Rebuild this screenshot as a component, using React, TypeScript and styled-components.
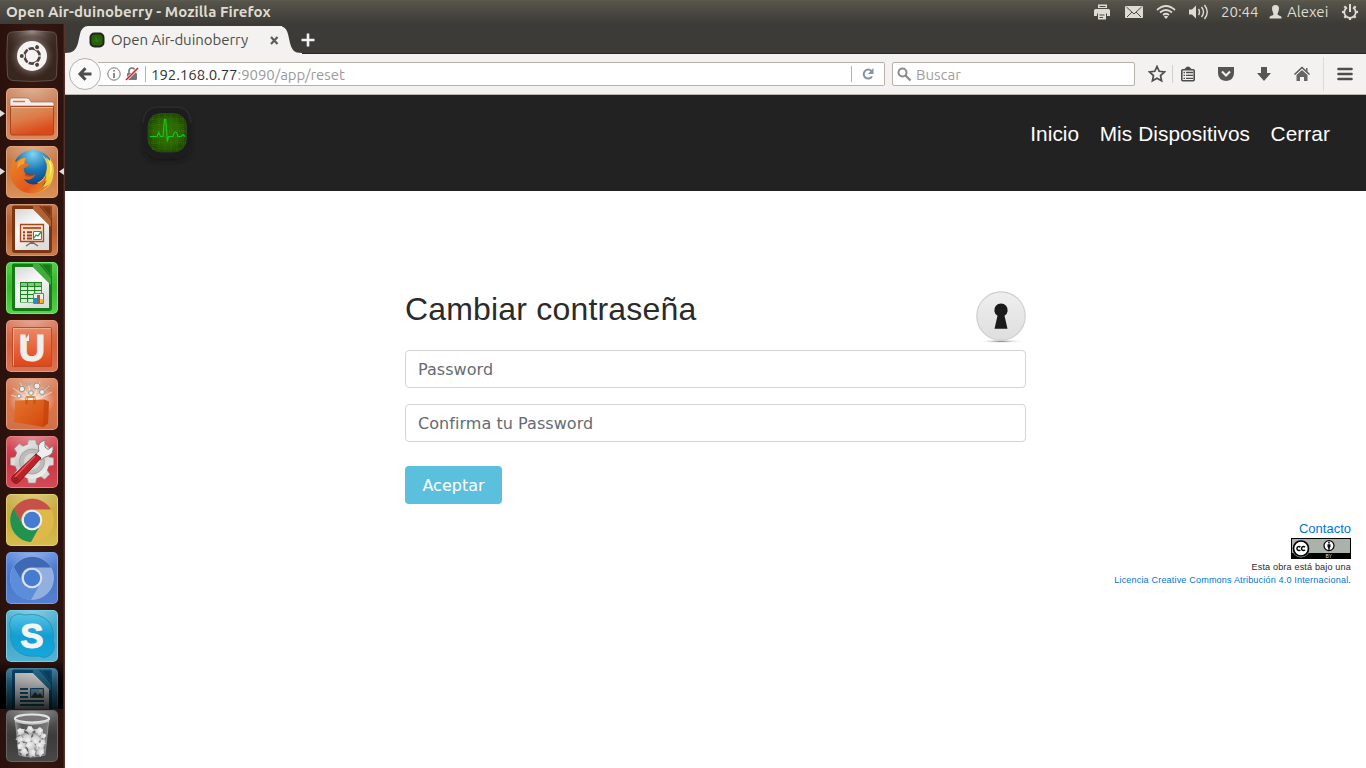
import React from "react";
import styled, { createGlobalStyle } from "styled-components";

const GlobalStyle = createGlobalStyle`
  *, *::before, *::after { box-sizing: border-box; }
  html, body { margin: 0; padding: 0; overflow: hidden; background: #fff; }
  svg { display: block; }
`;

const ui = `"Ubuntu", "Noto Sans", sans-serif`;

const Desktop = styled.div`
  width: 1366px;
  height: 768px;
  display: flex;
  flex-direction: column;
  overflow: hidden;
  font-family: ${ui};
`;

/* ---------- system panel ---------- */
const Panel = styled.header`
  flex: 0 0 24px;
  display: flex;
  align-items: center;
  justify-content: space-between;
  padding: 0 8px 0 6px;
  background: linear-gradient(#5e5b4f 0, #55534a 2px, #3e3d38 22px, #3c3b37);
  color: #dfdbd2;
  line-height: 24px;
`;
const WindowTitle = styled.span`
  font-size: 15px;
  font-weight: 700;
  letter-spacing: 0.05px;
  white-space: nowrap;
`;
const Indicators = styled.div`
  display: flex;
  align-items: center;
  height: 24px;
`;
const Indicator = styled.span<{ $w: number; $gap: number }>`
  width: ${(p) => p.$w}px;
  margin-right: ${(p) => p.$gap}px;
  font-size: 15px;
  white-space: nowrap;
`;

const Workspace = styled.div`
  flex: 1;
  display: flex;
  min-height: 0;
`;

/* ---------- launcher ---------- */
const Launcher = styled.nav`
  flex: 0 0 65px;
  display: flex;
  flex-direction: column;
  background: linear-gradient(90deg, #2a110c, #341711 50%, #2d130e);
  border-right: 1px solid #59322b;
  box-shadow: inset -1px 0 #42201a;
`;
const AppStack = styled.div`
  position: relative;
  flex: 0 0 685px;
  overflow: hidden;
  display: flex;
  flex-direction: column;
  gap: 6px;
  padding: 6px 0 0 6px;
  &::before,
  &::after {
    content: "";
    position: absolute;
    left: 0;
    right: 1px;
    bottom: 0;
    height: 48px;
    background: linear-gradient(rgba(0, 0, 0, 0), rgba(0, 0, 0, 0.7) 35%, #000);
  }
  &::after {
    background: linear-gradient(rgba(0, 0, 0, 0), rgba(0, 0, 0, 0.2) 30%, rgba(0, 0, 0, 0.82));
  }
`;
const Tile = styled.div<{ $top: string; $mid: string; $bottom: string; $edge: string }>`
  position: relative;
  flex: 0 0 52px;
  width: 52px;
  height: 52px;
  border-radius: 5px;
  background: radial-gradient(ellipse 60% 40% at 50% 0, rgba(255, 255, 255, 0.35), rgba(255, 255, 255, 0)),
    linear-gradient(${(p) => p.$top}, ${(p) => p.$mid} 50%, ${(p) => p.$bottom});
  box-shadow: inset 0 0 0 1px ${(p) => p.$edge};
`;
const DashTile = styled.div`
  flex: 0 0 52px;
`;
const TrashSlot = styled.div`
  padding: 1px 0 0 6px;
`;
const Pip = styled.svg<{ $side: "left" | "right" }>`
  position: absolute;
  top: 21px;
  ${(p) => (p.$side === "left" ? "left: -6px;" : "right: -6px;")}
`;

/* ---------- browser ---------- */
const Browser = styled.main`
  flex: 1;
  display: flex;
  flex-direction: column;
  min-width: 0;
  background: #fff;
`;
const TabStrip = styled.div`
  flex: 0 0 30px;
  display: flex;
  align-items: flex-end;
  background: #3c3b37;
  box-shadow: inset 0 -1px #2b2a27;
`;
const TabBody = styled.div`
  height: 28px;
  width: 194px;
  padding-left: 1px;
  display: flex;
  align-items: center;
  background: #f4f2f1;
`;
const TabTitle = styled.span`
  width: 159px;
  margin-left: 6px;
  font-size: 15px;
  line-height: 28px;
  letter-spacing: -0.05px;
  color: #4c4c4c;
  white-space: nowrap;
`;
const NewTab = styled.svg`
  margin: 0 0 7px -1px;
`;
const Toolbar = styled.div`
  flex: 0 0 41px;
  display: flex;
  align-items: center;
  padding-left: 4px;
  background: #f4f2f1;
  border-bottom: 1px solid #b9b4ae;
`;
const BackButton = styled.div`
  position: relative;
  width: 32px;
  height: 32px;
  border: 1px solid #b4afa9;
  border-radius: 50%;
  background: #fafafa;
  display: grid;
  place-items: center;
`;
const AddressBar = styled.div`
  width: 787px;
  height: 24px;
  margin-left: -3px;
  padding-left: 9px;
  display: flex;
  align-items: center;
  border: 1px solid #b6b1ab;
  border-left: 0;
  border-radius: 0 2px 2px 0;
  background: #fff;
`;
const Rule = styled.i<{ $h: number; $color?: string; $before?: number; $after?: number }>`
  width: 1px;
  height: ${(p) => p.$h}px;
  margin: 0 ${(p) => p.$after || 0}px 0 ${(p) => p.$before || 0}px;
  background: ${(p) => p.$color || "#b6b1ab"};
`;
const LockIcon = styled.svg`
  margin-left: 4px;
`;
const Url = styled.span`
  flex: 1;
  margin-left: 5px;
  padding-top: 2px;
  font-size: 15px;
  letter-spacing: -0.06px;
  line-height: 22px;
  color: #9a9a9a;
  white-space: nowrap;
  b { font-weight: 400; color: #333; }
`;
const Reload = styled.svg`
  margin: 0 9px 0 10px;
`;
const SearchBar = styled.div`
  width: 243px;
  height: 24px;
  margin-left: 7px;
  padding-left: 4px;
  display: flex;
  align-items: center;
  gap: 4px;
  border: 1px solid #b6b1ab;
  border-radius: 2px;
  background: #fff;
  color: #a0a0a0;
  font-size: 15px;
  line-height: 20px;
  span { padding-top: 2px; }
`;
const Tools = styled.div`
  display: flex;
  align-items: center;
  margin-left: 13px;
  color: #4d4d4d;
`;
const Tool = styled.span<{ $gap: number }>`
  width: 18px;
  margin-right: ${(p) => p.$gap}px;
`;
const MenuIcon = styled.svg`
  margin-left: 13px;
`;

/* ---------- page ---------- */
const SiteHeader = styled.div`
  flex: 0 0 96px;
  display: flex;
  justify-content: space-between;
  align-items: flex-start;
  padding: 4px 36px 0 70px;
  background: #222;
`;
const SiteNav = styled.div`
  display: flex;
  gap: 20.500px;
  padding-top: 20px;
  font: 20.8px/30px "Liberation Sans", Arial, sans-serif;
  letter-spacing: 0.08px;
  color: #fff;
  white-space: nowrap;
`;
const ResetForm = styled.section`
  width: 621px;
  margin: 100px 0 0 340px;
  display: flex;
  flex-direction: column;
  align-items: flex-start;
`;
const FormHead = styled.div`
  width: 100%;
  height: 59px;
  display: flex;
  justify-content: space-between;
`;
const Heading = styled.h2`
  margin: 0;
  font: 400 32px/36px "Liberation Sans", Arial, sans-serif;
  letter-spacing: 0.18px;
  color: #292b2c;
`;
const Field = styled.input`
  width: 100%;
  height: 38px;
  margin-bottom: 16px;
  padding: 0 12px;
  border: 1px solid #d5d5d6;
  border-radius: 4px;
  font: 16px/24px "DejaVu Sans", sans-serif;
  letter-spacing: 0.05px;
  outline: none;
  background: #fff;
  &::placeholder { color: #636c72; opacity: 1; }
`;
const Submit = styled.button`
  width: 97px;
  height: 38px;
  margin-top: 8px;
  padding: 2px 0 0;
  border: 0;
  border-radius: 4px;
  background: #5bc0de;
  color: #fff;
  font: 16px/24px "DejaVu Sans", sans-serif;
`;
const Footer = styled.footer`
  display: flex;
  flex-direction: column;
  align-items: flex-end;
  margin-top: 15px;
  padding-right: 15px;
  color: #292b2c;
`;
const Contact = styled.span`
  font: 13px/19px "Liberation Sans", Arial, sans-serif;
  color: #0275d8;
`;
const License = styled.p`
  margin: 2px 0 0;
  text-align: right;
  font: 9.1px/13px "Liberation Sans", Arial, sans-serif;
  letter-spacing: 0.15px;
  span { color: #0275d8; }
`;

/* ---------- drawings ---------- */
const teeth = Array.from({ length: 8 }, (_, i) => i * 45);

const UbuntuMark = () => (
  <svg width="52" height="52" viewBox="0 0 52 52">
    <defs>
      <radialGradient id="dashGlow" cx=".5" cy=".5" r=".55">
        <stop offset="0" stopColor="#b5aba7" /><stop offset=".6" stopColor="#75645f" stopOpacity=".8" /><stop offset="1" stopColor="#382622" stopOpacity="0" />
      </radialGradient>
      <radialGradient id="dashTop" cx=".5" cy="0" r=".55">
        <stop offset="0" stopColor="#b4aaa6" stopOpacity=".8" /><stop offset="1" stopColor="#5a4a46" stopOpacity="0" />
      </radialGradient>
    </defs>
    <path d="M6 2Q26-1 46 2Q50 2 50.500 7Q52 26 50.500 45Q50 50 45 50.500Q26 52.500 7 50.500Q2 50 1.500 45Q0 26 1.500 7Q2 2 6 2Z" fill="#39261f" stroke="#604f4a" />
    <path d="M6 2Q26-1 46 2Q50 2 50.500 7Q52 26 50.500 45Q26 52 1.500 45Q0 26 1.500 7Q2 2 6 2Z" fill="url(#dashTop)" />
    <circle cx="26" cy="26" r="22" fill="url(#dashGlow)" />
    <circle cx="26" cy="26" r="15" fill="#f6f4f3" />
    <circle cx="26" cy="26" r="7.600" fill="none" stroke="#52423d" strokeWidth="2.700" />
    {[0, 120, 240].map((a) => (
      <g key={a} transform={`rotate(${a} 26 26)`}>
        <circle cx="16" cy="26" r="3" fill="#f6f4f3" /><circle cx="15.800" cy="26" r="2" fill="#52423d" />
        <path d="M31 26h6" stroke="#f6f4f3" strokeWidth="1.200" />
      </g>
    ))}
  </svg>
);

const Files = () => (
  <svg width="52" height="52" viewBox="0 0 52 52">
    <defs><linearGradient id="folder" x1="0" y1="0" x2=".4" y2="1"><stop offset="0" stopColor="#d39a69" /><stop offset=".5" stopColor="#de7a48" /><stop offset="1" stopColor="#dc4818" /></linearGradient></defs>
    <path d="M4 18V12q0-2 2-2h15q2 0 3 2l1 2h21q2 0 2 2v2z" fill="#f5efeb" stroke="#a86b4b" strokeWidth=".7" />
    <path d="M7 13.500h12" stroke="#e66b32" strokeWidth="1.500" />
    <path d="M4.500 18.500h43V45q0 2-2 2h-39q-2 0-2-2z" fill="url(#folder)" stroke="#a54822" />
    <path d="M5 19.500h42" stroke="#eebb94" />
  </svg>
);

const Firefox = () => (
  <svg width="52" height="52" viewBox="0 0 52 52">
    <defs>
      <radialGradient id="globe" cx=".5" cy=".1" r=".8"><stop offset="0" stopColor="#80d5f1" /><stop offset=".5" stopColor="#1b79b8" /><stop offset="1" stopColor="#123a76" /></radialGradient>
      <linearGradient id="fox" x1="0" y1="0" x2="1" y2="1"><stop offset="0" stopColor="#ed8725" /><stop offset=".65" stopColor="#e0581c" /><stop offset="1" stopColor="#ef9a28" /></linearGradient>
    </defs>
    <circle cx="27" cy="24" r="20" fill="url(#globe)" />
    <path d="M36 9Q43 17 40 27Q38 34 31 37Q37 39 41 34Q36 45 24 47Q40 48 46 35Q49 26 47 18L44 12L44 18Q41 12 36 9Z" fill="#f2cf38" />
    <path d="M40 27Q39 35 31 38Q22 40 18 33Q25 36 30 28Q24 31 20 28Q17 25 18 22Q22 21 23 18L19 17Q18 14 21 11Q15 11 10 16Q8 15 8 12Q5 16 5 21Q2 31 8 38Q14 47 26 47.500Q38 47 44 37Q40 41 36 41Q41 35 40 27Z" fill="url(#fox)" />
    <path d="M12 16Q16 12 20 12Q18 15 18 18Q14 18 11 23Z" fill="#f6a13a" />
    <path d="M19 26Q24 29 30 28Q26 32 19 30Z" fill="#a82f0c" opacity=".5" />
    <path d="M40 11Q47 21 43 32Q48 23 44 15Z" fill="#fff18c" />
  </svg>
);

const DocumentBase = ({ dark, light, id }: { dark: string; light: string; id: string }) => (
  <>
    <defs><linearGradient id={id} x1="0" y1="0" x2=".5" y2="1"><stop offset="0" stopColor="#d6d6d6" /><stop offset=".5" stopColor="#fafafa" /><stop offset="1" stopColor="#ddd" /></linearGradient></defs>
    <path d="M8 1.500h36q2 0 2 2V46q0 3-3 3H9q-3 0-3-3V3.500q0-2 2-2z" fill={dark} />
    <path d="M9 5H27L43 21V46H9z" fill={`url(#${id})`} />
    <path d="M27 2h6l12 14v7L27 5z" fill={light} opacity=".65" />
    <path d="M35 2h8q2 0 2 2v10z" fill={dark} stroke={light} strokeOpacity=".6" strokeWidth=".7" />
  </>
);

const Impress = () => (
  <svg width="52" height="52" viewBox="0 0 52 52">
    <DocumentBase dark="#7c3611" light="#ce7b46" id="impressPage" />
    <path d="M26 37v3M26 38l-6 4M26 38l6 4" stroke="#6c6c6c" strokeWidth="1.500" />
    <path d="M14.500 20.500h23v17h-23z" fill="#f6dfcc" stroke="#a94619" strokeWidth="1.300" />
    <path d="M17 24h18" stroke="#bc5a27" strokeWidth="2" />
    <path d="M17 28.200h2M21 28.200h5M17 31.400h2M21 31.400h5M17 34.600h2M21 34.600h5" stroke="#98401a" strokeWidth="2" />
    <path d="M27.500 27.500h8v8h-8z" fill="#fff" stroke="#687263" />
    <path d="M28 34l2-3 2 1 3-4" fill="none" stroke="#299441" strokeWidth="1.300" />
  </svg>
);

const Calc = () => (
  <svg width="52" height="52" viewBox="0 0 52 52">
    <DocumentBase dark="#137c16" light="#5bc454" id="calcPage" />
    <path d="M14 20h22v20.500H14z" fill="#1c821d" />
    {[0, 1, 2, 3, 4].map((r) => [0, 1, 2].map((c) => (
      <rect key={`${r}${c}`} x={15 + c * 7.1} y={21 + r * 4} width="6" height="3" fill={r === 0 ? "#87c685" : "#d9edd9"} />
    )))}
    <path d="M27.500 31.500h10v10h-10z" fill="#eee" stroke="#777" />
    <path d="M29.500 41v-5" stroke="#1a90d2" strokeWidth="3" /><path d="M32.500 41v-8" stroke="#c3531d" strokeWidth="3" /><path d="M35.700 41v-4" stroke="#e9b51b" strokeWidth="3" />
  </svg>
);

const UbuntuOne = () => (
  <svg width="52" height="52" viewBox="0 0 52 52">
    <defs><linearGradient id="one" x1="0" y1="0" x2="0" y2="1"><stop offset="0" stopColor="#e98b68" /><stop offset=".55" stopColor="#e66236" /><stop offset="1" stopColor="#dc461a" /></linearGradient></defs>
    <rect x="6.500" y="7.500" width="39" height="39" rx="1" fill="url(#one)" stroke="#bd4b27" />
    <path d="M7.500 45.500V8.500h37" fill="none" stroke="#f1aa8e" />
    <text x="12.800" y="40.500" fontFamily="Liberation Sans" fontWeight="700" fontSize="37" textLength="26.500" lengthAdjust="spacingAndGlyphs" fill="#f0eeec" stroke="#f0eeec" strokeWidth="1">U</text>
    <path d="M18 21v-2.500l5-5v7.500z" fill="#f0eeec" />
    <path d="M14 13h7l-3.500 5.500H21v2l-3 .5V14z" fill="#e98058" opacity=".0" />
    <path d="M19.500 14.500l3-2.200v2.200l-2.500 4z" fill="#e5764e" />
  </svg>
);

const Software = () => (
  <svg width="52" height="52" viewBox="0 0 52 52">
    <defs>
      <linearGradient id="bag" x1="0" y1="0" x2="1" y2="1"><stop offset="0" stopColor="#e5752c" /><stop offset="1" stopColor="#d2440b" /></linearGradient>
      <radialGradient id="burst" cx=".5" cy=".55" r=".5"><stop offset="0" stopColor="#fff" /><stop offset="1" stopColor="#fff" stopOpacity="0" /></radialGradient>
    </defs>
    <ellipse cx="26" cy="21" rx="23" ry="18" fill="url(#burst)" />
    <g stroke="#fff" opacity=".55"><path d="M26 24L7 10M26 24L14 5M26 24L22 4M26 24L34 4M26 24L43 8M26 24L46 14M26 24L5 17" /></g>
    <g fill="#f8e8dd" stroke="#78999a" strokeWidth=".9"><circle cx="16" cy="11" r="2.700" /><circle cx="25" cy="15" r="2.300" /><circle cx="31" cy="8" r="3" /><circle cx="36" cy="14" r="2.500" /><circle cx="22" cy="6" r="1.200" /><circle cx="41" cy="10" r="1.200" /><circle cx="13" cy="18" r="2" /></g>
    <path d="M9 22.500L38 21.500l5 2-1 22-5 3.500-29-5z" fill="url(#bag)" />
    <path d="M38 21.500l5 2-1 22-5 3.500z" fill="#c04108" opacity=".6" />
    <path d="M20.500 26v-6q0-1 1-1h6q1 0 1 1v6" fill="none" stroke="#b95719" strokeWidth="2" />
    <path d="M20.500 22v-2q0-1 1-1h6q1 0 1 1v2" fill="none" stroke="#f5c283" />
  </svg>
);

const Settings = () => (
  <svg width="52" height="52" viewBox="0 0 52 52">
    <defs><linearGradient id="gear" x1="0" y1="0" x2=".6" y2="1"><stop offset="0" stopColor="#f4f4f4" /><stop offset=".5" stopColor="#c6c6c5" /><stop offset="1" stopColor="#eee" /></linearGradient></defs>
    <g fill="#dcdbd9" stroke="#a59d9a" strokeWidth=".7">
      {teeth.map((a) => <path key={a} transform={`rotate(${a} 26 25.500)`} d="M21 11l1.500-7h7l1.500 7z" />)}
    </g>
    <circle cx="26" cy="25.500" r="17.300" fill="url(#gear)" />
    <circle cx="26" cy="25.500" r="12.500" fill="#bcbcbb" stroke="#a6a4a2" />
    <circle cx="26" cy="25.500" r="8" fill="#d8d7d6" />
    <path d="M29 20Q31 16 33 15Q31 9 35 6L39 4V11L42 13.500L47 10Q48 18 42 20Q38 21 35 24Z" fill="#eee" stroke="#83807d" />
    <path d="M30 18l5 4L13 46q-3 3-6 0t0-6z" fill="#bf2025" stroke="#871519" />
    <path d="M29 20L9 41" stroke="#df5c5f" strokeWidth="1.400" />
    <circle cx="10" cy="43.500" r="1.600" fill="#bf2025" stroke="#74171a" />
  </svg>
);

const ChromeWheel = ({ top, left, right, hub, rim }: { top: string; left: string; right: string; hub: string; rim: string }) => (
  <svg width="52" height="52" viewBox="0 0 52 52">
    <circle cx="26" cy="26" r="22" fill={right} />
    <path d="M7.500 15A22 22 0 0 1 45 15.500H26A10 10 0 0 0 17 31z" fill={top} />
    <path d="M7.500 14.500A22 22 0 0 0 25 48L34.500 31A10 10 0 0 1 17 31z" fill={left} />
    <circle cx="26" cy="26" r="10.300" fill={rim} /><circle cx="26" cy="26" r="8.200" fill={hub} />
  </svg>
);

const Skype = () => (
  <svg width="52" height="52" viewBox="0 0 52 52">
    <defs><linearGradient id="sky" x1="0" y1="0" x2="0" y2="1"><stop offset="0" stopColor="#55c4e8" /><stop offset=".5" stopColor="#139ed2" /><stop offset="1" stopColor="#14a8dc" /></linearGradient></defs>
    <path d="M5 8Q11 2 18 5Q34 2 43 12Q49 21 47 31Q50 37 46 43Q40 50 33 46Q17 48 9 39Q3 31 5 21Q2 14 5 8Z" fill="url(#sky)" stroke="#268caf" strokeWidth=".8" />
    <text x="26" y="37.800" textAnchor="middle" fontFamily="Liberation Sans" fontWeight="700" fontSize="35" fill="#f4f4f4" stroke="#f4f4f4">S</text>
  </svg>
);

const Writer = () => (
  <svg width="52" height="52" viewBox="0 0 52 52">
    <DocumentBase dark="#0b4b70" light="#388cb5" id="writerPage" />
    <path d="M14 21h8M14 25h8M14 29h8M14 33h24M14 37h24" stroke="#176189" strokeWidth="2" />
    <path d="M24.500 20.500h13v9h-13z" fill="#79b7d1" stroke="#176189" />
    <path d="M25 29l4-5 3 3 2-2 3 4z" fill="#343b3e" /><circle cx="34.500" cy="23" r="1.500" fill="#edcd67" />
  </svg>
);

const crumples = [
  [15, 22, 4], [24, 20, 4], [33, 22, 4.5], [37, 26, 3], [14, 29, 3.5], [21, 28, 5], [30, 29, 5], [37, 32, 3],
  [16, 36, 4.5], [25, 36, 5], [34, 37, 4.5], [18, 42, 4], [26, 43, 4], [34, 42, 4],
];

const Trash = () => (
  <svg width="52" height="52" viewBox="0 0 52 52">
    <defs>
      <linearGradient id="glass"><stop offset="0" stopColor="#909090" /><stop offset=".2" stopColor="#545454" /><stop offset="1" stopColor="#7c7c7c" /></linearGradient>
      <radialGradient id="paper" cx=".35" cy=".3" r=".8"><stop offset="0" stopColor="#f2f2f2" /><stop offset=".6" stopColor="#cfcfcf" /><stop offset="1" stopColor="#8c8c8c" /></radialGradient>
    </defs>
    <path d="M9 8h34l-4 37q-13 4-26 0z" fill="url(#glass)" stroke="#b3b3b3" strokeOpacity=".6" />
    {crumples.map(([x, y, r], i) => (
      <path key={i} transform={`translate(${x} ${y}) rotate(${i * 37}) scale(${r / 4})`} d="M-4-2L-1-4L1-3L4-3L3 0L5 2L2 4L-1 3L-4 4L-3 1Z" fill="url(#paper)" />
    ))}
    <ellipse cx="26" cy="8.500" rx="17" ry="4" fill="#777" stroke="#e4e4e4" strokeWidth="2.200" />
    <path d="M9 11q17 6 34 0" fill="none" stroke="#c9c9c9" strokeWidth="1.500" />
  </svg>
);

const PulseIcon = () => (
  <svg width="64" height="68" viewBox="0 0 64 68">
    <defs>
      <filter id="soft" x="-30%" y="-30%" width="160%" height="160%"><feGaussianBlur stdDeviation="2.500" /></filter>
      <radialGradient id="screen"><stop offset="0" stopColor="#347200" /><stop offset=".7" stopColor="#2b6400" /><stop offset="1" stopColor="#1f4d02" /></radialGradient>
    </defs>
    <rect x="9" y="12" width="46" height="50" rx="14" fill="#131313" opacity=".75" filter="url(#soft)" />
    <rect x="7" y="7" width="50" height="52" rx="16" fill="#1d1d1d" />
    <path d="M8 24Q9 8 23 8H41Q55 8 56 24" fill="none" stroke="#292929" strokeWidth="2" />
    <rect x="13" y="14.500" width="38.500" height="38.500" rx="13" fill="url(#screen)" stroke="#2e4a22" strokeWidth=".8" />
    <path d="M15 20h34M14 26h37M14 32h37M14 38h37M14 44h37M17 50h31M18 16v36M24 15v38M30 15v38M36 15v38M42 15v38M48 19v30" stroke="#5a9132" strokeOpacity=".35" strokeDasharray="1 1" />
    <path d="M15 37.500h7l1.700-4 1.800 4H28l1.500-17h1.300l1.500 22 1.200-5H38q2.500-9 5 0h3l2-2 2 2" fill="none" stroke="#10c91c" strokeWidth="1.200" />
  </svg>
);

const Keyhole = () => (
  <svg width="50" height="53" viewBox="0 0 50 53">
    <defs>
      <linearGradient id="disc" x1="0" y1="0" x2="0" y2="1"><stop offset="0" stopColor="#efefef" /><stop offset="1" stopColor="#dedede" /></linearGradient>
      <radialGradient id="drop"><stop offset="0" stopColor="#777" /><stop offset="1" stopColor="#fff" stopOpacity="0" /></radialGradient>
    </defs>
    <ellipse cx="25" cy="50.300" rx="23" ry="1.800" fill="url(#drop)" />
    <circle cx="25" cy="25" r="24.200" fill="url(#disc)" stroke="#cfcfcf" strokeWidth="1.200" />
    <path d="M21.500 24.800A6.700 6.700 0 1 1 28.500 24.800L31.500 37.800H18.500z" fill="#1b1b1b" />
  </svg>
);

const LicenseBadge = () => (
  <svg width="60" height="21" viewBox="0 0 60 21">
    <rect width="60" height="21" fill="#000" /><rect x="1" y="1" width="58" height="14" fill="#aab2ab" />
    <circle cx="10" cy="10.500" r="9" fill="#aab2ab" />
    <circle cx="10" cy="10.500" r="7.500" fill="#fff" stroke="#000" strokeWidth="1.700" />
    <path d="M9.400 9.100a2 2 0 1 0 0 2.800M14 9.100a2 2 0 1 0 0 2.800" fill="none" stroke="#000" strokeWidth="1.500" />
    <circle cx="38" cy="7.600" r="5" fill="#fff" stroke="#000" strokeWidth="1.200" />
    <circle cx="38" cy="4.700" r=".9" /><path d="M36.500 6.200h3v3h-.7v2.600h-1.600V9.200h-.7z" />
    <text x="34.500" y="19.800" fontFamily="Liberation Sans" fontSize="5" fill="#ddd">BY</text>
  </svg>
);

const Icon18 = ({ children }: { children: React.ReactNode }) => <svg width="18" height="18" viewBox="0 0 18 18">{children}</svg>;

const tiles = [
  { c: ["#c98a63", "#d0784d", "#dc8a5d", "#e6a685"], icon: <Files />, left: true },
  { c: ["#c98052", "#cd7948", "#db9259", "#e2a477"], icon: <Firefox />, left: true, right: true },
  { c: ["#bf6f42", "#b55e30", "#cc7d4c", "#db9470"], icon: <Impress /> },
  { c: ["#45c83a", "#39b52e", "#58d34e", "#78ec6e"], icon: <Calc /> },
  { c: ["#d77b5c", "#d7603c", "#db7353", "#e69880"], icon: <UbuntuOne /> },
  { c: ["#d7805c", "#dc7549", "#d07048", "#e69a77"], icon: <Software /> },
  { c: ["#d5515c", "#cc3543", "#d34b57", "#e57e85"], icon: <Settings /> },
  { c: ["#c8af48", "#c9ad3b", "#d5bd50", "#e2d173"], icon: <ChromeWheel top="#c5514a" left="#219250" right="#dfb84a" hub="#437cd1" rim="#eee" /> },
  { c: ["#5a87dc", "#4777cb", "#5481d3", "#78a1e5"], icon: <ChromeWheel top="#3f69b6" left="#5c8ddb" right="#93afe0" hub="#467bd2" rim="#dee0e5" /> },
  { c: ["#51b3d1", "#3ca5c9", "#53b4d5", "#79d0e7"], icon: <Skype /> },
  { c: ["#347fa6", "#286d94", "#24678d", "#4e91b1"], icon: <Writer /> },
];

export default function App() {
  return (
    <Desktop>
      <GlobalStyle />
      <Panel>
        <WindowTitle>Open Air-duinoberry - Mozilla Firefox</WindowTitle>
        <Indicators>
          <Indicator $w={18} $gap={13}>
            <Icon18><path d="M4 1.500h9v3.500H4zM0 7.500q0-1.500 1.500-1.500h13q1.500 0 1.500 1.500V13h-3v-2.500H3V13H0z" fill="#dfdbd2" /><path d="M4 10h8v6.500H4z" fill="#dfdbd2" /><path d="M5.500 12h5M5.500 14.500h3.500M5.500 3.500h6" stroke="#4a4841" /></Icon18>
          </Indicator>
          <Indicator $w={18} $gap={13}>
            <Icon18><rect y="3" width="18" height="12" rx="1" fill="#dfdbd2" /><path d="M1.500 4l7.500 7 7.500-7M2 14l5-5M16 14l-5-5" fill="none" stroke="#4a4841" /></Icon18>
          </Indicator>
          <Indicator $w={20} $gap={13}>
            <svg width="20" height="18" viewBox="0 0 20 18"><path d="M1 7q9-8 18 0M4 9.500q6-5 12 0M7 12q3-2.500 6 0" fill="none" stroke="#dfdbd2" strokeWidth="1.700" /><path d="M7.800 13.500q2.200-1.500 4.400 0L10 16z" fill="#dfdbd2" /></svg>
          </Indicator>
          <Indicator $w={20} $gap={12}>
            <svg width="20" height="18" viewBox="0 0 20 18"><path d="M0 6.500h3l4-4v13l-4-4H0z" fill="#dfdbd2" /><path d="M9.500 6q2 3 0 6M12.500 4q4 5 0 10M15.500 2q5.500 7 0 14" fill="none" stroke="#dfdbd2" strokeWidth="1.400" /></svg>
          </Indicator>
          <Indicator $w={37} $gap={11}>20:44</Indicator>
          <Indicator $w={13} $gap={5}>
            <svg width="13" height="18" viewBox="0 0 13 18"><path d="M6.500 2c4.200 0 4 4 2.500 7.500l-.5 2c0 1 4 1 4 3v1H.5v-1c0-2 4-2 4-3L4 9.500C2.500 6 2.300 2 6.500 2z" fill="#dfdbd2" /></svg>
          </Indicator>
          <Indicator $w={43} $gap={11}>Alexei</Indicator>
          <Indicator $w={17} $gap={0}>
            <Icon18>
              <path d="M6 4.400A5.700 5.700 0 1 0 12 4.400" fill="none" stroke="#dfdbd2" strokeWidth="1.800" /><path d="M9 1v8" stroke="#dfdbd2" strokeWidth="2" />
              {[45, 90, 135, 180, 225, 270, 315].map((a) => <path key={a} transform={`rotate(${a} 9 9)`} d="M9 1v2.500" stroke="#dfdbd2" strokeWidth="2.200" />)}
            </Icon18>
          </Indicator>
        </Indicators>
      </Panel>

      <Workspace>
        <Launcher>
          <AppStack>
            <DashTile><UbuntuMark /></DashTile>
            {tiles.map((t, i) => (
              <Tile key={i} $top={t.c[0]} $mid={t.c[1]} $bottom={t.c[2]} $edge={t.c[3]}>
                {t.icon}
                {t.left && <Pip $side="left" width="5" height="9"><path d="M0 1l5 3.500L0 8z" fill="#ddd" /></Pip>}
                {t.right && <Pip $side="right" width="5" height="9"><path d="M5 1L0 4.500 5 8z" fill="#ddd" /></Pip>}
              </Tile>
            ))}
          </AppStack>
          <TrashSlot><Tile $top="#606060" $mid="#3b3b3b" $bottom="#4b4848" $edge="#666"><Trash /></Tile></TrashSlot>
        </Launcher>

        <Browser>
          <TabStrip>
            <svg width="23" height="28" viewBox="0 0 23 28"><path d="M0 28V27C8 27 11 24 13 17L15 8Q17 0 23 0V28z" fill="#f4f2f1" /></svg>
            <TabBody>
              <svg width="16" height="16" viewBox="0 0 16 16"><rect x=".5" y=".5" width="15" height="15" rx="5" fill="#222" /><rect x="2.500" y="2.500" width="11" height="11" rx="3" fill="#286200" /><path d="M4 9h3V5l1 5 1-2h3" fill="none" stroke="#28832a" strokeWidth=".7" /></svg>
              <TabTitle>Open Air-duinoberry</TabTitle>
              <svg width="9" height="9" viewBox="0 0 9 9"><path d="M1 1l6.500 7M7.500 1L1 8" stroke="#5b5b59" strokeWidth="2.200" /></svg>
            </TabBody>
            <svg width="20" height="28" viewBox="0 0 20 28"><path d="M20 28V27C12 27 10 24 8 17L6 8Q4 0 -3 0V28z" fill="#f4f2f1" /></svg>
            <NewTab width="14" height="14" viewBox="0 0 14 14"><path d="M.5 7h13M7 .5v13" stroke="#f4f2f1" strokeWidth="2.600" /></NewTab>
          </TabStrip>

          <Toolbar>
            <BackButton><svg width="16" height="16" viewBox="0 0 16 16"><path d="M8.500 2.300L3 8l5.500 5.700M4 8h10.500" fill="none" stroke="#4d4d4d" strokeWidth="3" /></svg></BackButton>
            <AddressBar>
              <svg width="14" height="14" viewBox="0 0 14 14"><circle cx="7" cy="7" r="6.200" fill="none" stroke="#737373" /><path d="M7 6v5M7 3v1.600" stroke="#666" strokeWidth="1.500" /></svg>
              <LockIcon width="14" height="16" viewBox="0 0 14 16"><path d="M4 8V5q0-3 3-3t3 3v3" fill="none" stroke="#777" strokeWidth="1.600" /><rect x="2" y="7" width="10" height="7" rx="1" fill="#777" /><path d="M1 14L13 2" stroke="#fff" strokeWidth="3" /><path d="M1 14L13 2" stroke="#d8202c" strokeWidth="1.600" /></LockIcon>
              <Rule $h={16} $before={6} />
              <Url><b>192.168.0.77</b>:9090/app/reset</Url>
              <Rule $h={16} />
              <Reload width="13" height="14" viewBox="0 0 13 14"><path d="M10 9.500A4.500 4.500 0 1 1 9.500 4" fill="none" stroke="#8793a1" strokeWidth="2" /><path d="M11.500 1v6H6z" fill="#8793a1" /></Reload>
            </AddressBar>
            <SearchBar>
              <svg width="15" height="15" viewBox="0 0 15 15"><circle cx="5.500" cy="5.500" r="4" fill="none" stroke="#8b8b8b" strokeWidth="2" /><path d="M8.500 8.500l5 5" stroke="#8b8b8b" strokeWidth="2.300" /></svg>
              <span>Buscar</span>
            </SearchBar>
            <Tools>
              <Tool $gap={6}><Icon18><path d="M9 1.500l2.200 4.800 5.300.6-4 3.600 1.100 5.300L9 13.200l-4.600 2.600 1.100-5.300-4-3.600 5.300-.6z" fill="none" stroke="#4d4d4d" strokeWidth="1.700" /></Icon18></Tool>
              <Rule $h={18} $color="#d2cfcb" $after={6} />
              <Tool $gap={20}><Icon18><rect x="2.800" y="4.800" width="12.400" height="11" rx="1" fill="none" stroke="#4d4d4d" strokeWidth="1.600" /><path d="M5 5l1-1.500q3-4 6 0L13 5z" fill="#4d4d4d" /><path d="M4.500 7.500h1.500M7 7.500h7M4.500 10.400h1.500M7 10.400h7M4.500 13.300h1.500M7 13.300h7" stroke="#4d4d4d" strokeWidth="1.300" /></Icon18></Tool>
              <Tool $gap={20}><Icon18><path d="M1 2h16v6q0 7-8 8Q1 15 1 8z" fill="#555" /><path d="M5 6.500l4 4 4-4" fill="none" stroke="#f4f2f1" strokeWidth="2" /></Icon18></Tool>
              <Tool $gap={20}><Icon18><path d="M6 2h6v6h4l-7 8-7-8h4z" fill="#555" /></Icon18></Tool>
              <Tool $gap={12}><Icon18><path d="M1.500 9.500L9 2.500l7.500 7" fill="none" stroke="#555" strokeWidth="1.500" /><path d="M3.500 10L9 5l5.500 5v6h-3.500v-4H7v4H3.500zM13 3h1.500v4H13z" fill="#666" /></Icon18></Tool>
              <Rule $h={34} $color="#dedbd8" />
              <MenuIcon width="16" height="16" viewBox="0 0 16 16"><path d="M1.500 3h13M1.500 8h13M1.500 13h13" stroke="#4d4d4d" strokeWidth="2.600" strokeLinecap="round" /></MenuIcon>
            </Tools>
          </Toolbar>

          <SiteHeader>
            <PulseIcon />
            <SiteNav><span>Inicio</span><span>Mis Dispositivos</span><span>Cerrar</span></SiteNav>
          </SiteHeader>
          <ResetForm>
            <FormHead><Heading>Cambiar contraseña</Heading><Keyhole /></FormHead>
            <Field placeholder="Password" />
            <Field placeholder="Confirma tu Password" />
            <Submit>Aceptar</Submit>
          </ResetForm>
          <Footer>
            <Contact>Contacto</Contact>
            <LicenseBadge />
            <License>Esta obra está bajo una<br /><span>Licencia Creative Commons Atribución 4.0 Internacional</span>.</License>
          </Footer>
        </Browser>
      </Workspace>
    </Desktop>
  );
}
